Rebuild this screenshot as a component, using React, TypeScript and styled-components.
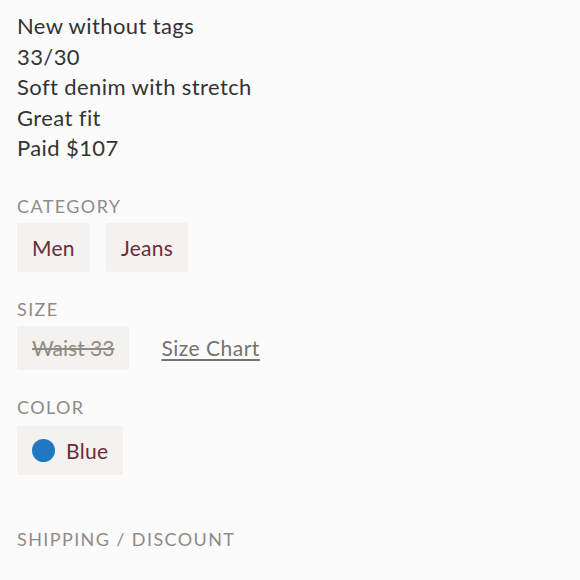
import React from "react";
import styled, { createGlobalStyle } from "styled-components";

const Global = createGlobalStyle`
  html, body { margin: 0; padding: 0; background: #fbfbfb; }
  body { font-family: "Lato", "Noto Sans", sans-serif; }
`;

const Page = styled.div`
  padding: 11px 17px 0 17px;
  display: flex;
  flex-direction: column;
`;

const Description = styled.div`
  font-size: 22px;
  line-height: 30.5px;
  letter-spacing: 0.4px;
  color: #333;
  margin-bottom: 31px;
`;

const Label = styled.div<{ $top?: number }>`
  font-size: 18px;
  line-height: 22px;
  letter-spacing: 1.4px;
  color: #8f8b87;
  text-transform: uppercase;
  margin-top: ${(p) => p.$top ?? 0}px;
`;

const ChipRow = styled.div<{ $top?: number }>`
  display: flex;
  align-items: center;
  gap: 16px;
  margin-top: ${(p) => p.$top ?? 6}px;
`;

const Chip = styled.div<{ $h?: number }>`
  display: flex;
  align-items: center;
  gap: 11px;
  height: ${(p) => p.$h ?? 49}px;
  padding: 0 15px;
  background: #f4f1ee;
  border-radius: 2px;
  font-size: 21px;
  letter-spacing: 0.3px;
  color: #6b2d3a;
  box-sizing: border-box;
`;

const Struck = styled.span`
  color: #8f8b87;
  letter-spacing: 0;
  text-decoration: line-through;
`;

const SizeChart = styled.a`
  font-size: 21px;
  letter-spacing: 0.5px;
  color: #77726e;
  text-decoration: underline;
  text-underline-offset: 3px;
  margin-left: 16px;
`;

const Dot = styled.span<{ $c: string }>`
  width: 23px;
  height: 23px;
  border-radius: 50%;
  background: ${(p) => p.$c};
  display: inline-block;
`;

export default function App() {
  return (
    <>
      <Global />
      <Page>
        <Description>
          <div>New without tags</div>
          <div>33/30</div>
          <div>Soft denim with stretch</div>
          <div>Great fit</div>
          <div>Paid $107</div>
        </Description>
        <Label>Category</Label>
        <ChipRow>
          <Chip>Men</Chip>
          <Chip>Jeans</Chip>
        </ChipRow>
        <Label $top={26}>Size</Label>
        <ChipRow>
          <Chip $h={44}>
            <Struck>Waist 33</Struck>
          </Chip>
          <SizeChart>Size Chart</SizeChart>
        </ChipRow>
        <Label $top={26}>Color</Label>
        <ChipRow $top={8}>
          <Chip>
            <Dot $c="#1f78c1" />
            Blue
          </Chip>
        </ChipRow>
        <Label $top={53}>Shipping / Discount</Label>
      </Page>
    </>
  );
}
